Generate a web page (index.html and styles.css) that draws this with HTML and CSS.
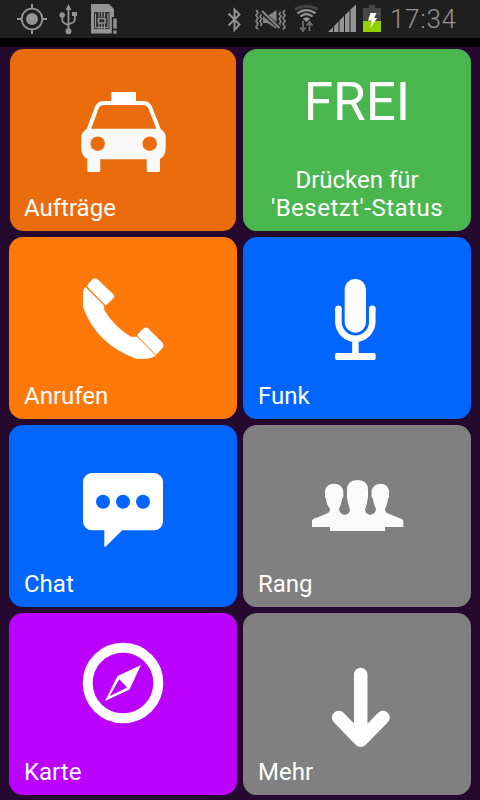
FILE: index.html
```html
<!DOCTYPE html>
<html lang="de">
<head>
  <meta charset="UTF-8" />
  <title>Taxi</title>
  <meta name="viewport" content="width=device-width, initial-scale=1" />
  <link rel="stylesheet" href="styles.css">
</head>
<body>
  <header class="statusbar">
    <div class="notifications">
      <svg width="30" height="38" viewBox="0 0 30 38">
        <circle cx="15" cy="19" r="6" fill="#949494"/>
        <circle cx="15" cy="19" r="10.3" fill="none" stroke="#949494" stroke-width="1.8"/>
        <path d="M15 4v5M15 29v5M0 19h5M25 19h5" stroke="#949494" stroke-width="2"/>
      </svg>
      <svg width="20" height="38" viewBox="0 0 20 38">
        <path d="M9.5 8v23M3.3 16v4.5q0 1.5 1.5 2.3l4.7 2.7M15.8 15v5q0 1.5-1.5 2.3L9.5 24.5" fill="none" stroke="#949494" stroke-width="1.8"/>
        <path d="M9.5 4L12.5 10h-6zM13 12h5v4h-5z" fill="#949494"/>
        <circle cx="3.2" cy="15" r="2.7" fill="#949494"/>
        <circle cx="9.5" cy="31.2" r="3" fill="#949494"/>
      </svg>
      <svg width="27" height="38" viewBox="0 0 27 38">
        <path d="M0 4h18l5 5v8h-2v16.5H0z" fill="#949494"/>
        <path d="M3 12h15.500v17H3z" fill="#2e2e2e"/>
        <path d="M4.500 13.500v14h12.500v-14M8 12v5M10.800 12v5M13.500 12v5M8 24v5M10.800 24v5M13.500 24v5" fill="none" stroke="#949494" stroke-width="1.100"/>
        <path d="M7.500 18.500h6.500v4.500h-6.500z" fill="none" stroke="#949494" stroke-width="1.600"/>
        <path d="M20.800 17h5.200v17h-5.200z" fill="#1f1f1f"/>
        <path d="M22.300 18.500h3.400v10h-3.400zM22.300 30.500h3.400v3.300h-3.400z" fill="#949494"/>
      </svg>
    </div>
    <div class="system">
      <svg width="20" height="38" viewBox="0 0 20 38">
        <path d="M1.500 13.500L12.500 24.500 7.500 30V9.500L12.500 14.500 1.500 25.500" fill="none" stroke="#949494" stroke-width="1.9"/>
      </svg>
      <svg width="34" height="38" viewBox="0 0 34 38">
        <path d="M3 10l2 2.500-2 3 2 2.700-2 3 2 2.700-2 3 2 2.500M7.500 12l1.300 2-1.800 2.500 1.800 2.500-1.800 2.500 1.800 2.500-1.300 2M32 10l-2 2.500 2 3-2 2.700 2 3-2 2.700 2 3-2 2.500M27.500 12l-1.300 2 1.800 2.500-1.800 2.500 1.800 2.500-1.800 2.500 1.300 2" fill="none" stroke="#858585" stroke-width="1.700"/>
        <path d="M10 16h4.500l9-6v19l-9-6H10z" fill="#858585"/>
        <path d="M8 11.500L27 28" stroke="#1f1f1f" stroke-width="4"/>
        <path d="M9 11L26.500 28" stroke="#858585" stroke-width="2.200"/>
      </svg>
      <svg width="28" height="38" viewBox="0 0 28 38">
        <path d="M2 9.300q11.500-6 23 0" fill="none" stroke="#444" stroke-width="3"/>
        <path d="M4.500 13.300q9-6.500 18 0M7.500 16.500q6-5 12 0" fill="none" stroke="#949494" stroke-width="2.200"/>
        <path d="M9.800 18.700q3.700-3 7.400 0L13.500 22z" fill="#949494"/>
        <path d="M10 21v10M7 27.500l3 3.500 2.500-3.500M16.500 31v-9M13.500 25.500l3-3.500 3 3.500" fill="none" stroke="#6d6d6d" stroke-width="1.800"/>
      </svg>
      <svg width="29" height="38" viewBox="0 0 29 38">
        <path d="M1 32L6 27V32zM7 26L11.500 21.500V32H7zM12.500 20.500L17 16V32H12.500zM18 15L22.500 10.500V32H18zM23.500 9.500L29 4.500V32H23.500z" fill="#949494"/>
      </svg>
      <svg width="20" height="38" viewBox="0 0 20 38">
        <path d="M7 5h6v3h6v13H1V8h6z" fill="#464646"/>
        <path d="M1 21h18v11H1z" fill="#92d000"/>
        <path d="M8.500 13h6l-2.300 5h3L8.300 28l1.500-7.500H6z" fill="#fff"/>
      </svg>
      <span class="clock">17:34</span>
    </div>
  </header>

  <main class="tiles">
    <div class="tile jobs">
      <svg class="icon" viewBox="0 0 120 120">
        <path d="M49.5 19h22.500q1 0 1 1v9H48.300v-9q0-1 1.200-1z" fill="#fff"/>
        <path d="M25.500 57L34 34Q36 29.900 41 29.900H80Q85 29.900 87 34L96 57" fill="none" stroke="#fff" stroke-width="4"/>
        <path d="M24 55.700H97Q102.700 59 102.700 64V75Q102.700 83 97 86V97.500Q97 99 95.500 99H85.200Q83.700 99 83.700 97.500V86.300H37.300V97.500Q37.300 99 35.800 99H25.800Q24.300 99 24.300 97.500V86Q18.300 83 18.300 75V64Q18.300 59 24 55.700z" fill="#f8f8f8"/>
        <circle class="hole" cx="34.7" cy="70.7" r="7.2"/>
        <circle class="hole" cx="86.7" cy="70.7" r="7.2"/>
      </svg>
      <span class="label">Aufträge</span>
    </div>

    <div class="tile status">
      <span class="state">FREI</span>
      <span class="hint">Drücken für<br><span class="target">'Besetzt'-Status</span></span>
    </div>

    <div class="tile call">
      <svg class="icon" viewBox="0 0 120 120">
        <path d="M29.500 18.300Q32 16 34.500 18.300L50.300 33.300Q52.300 35.200 50.300 37.200L43.500 44Q42.500 44.500 41.700 43.500L25 26.500Q23.500 25 25 23z"/>
        <path d="M22.300 25.700L41 44.500 41.300 49Q51 65.500 67.700 75.700L74 75.700 92.700 94.700Q87 98 80 98H73.700Q33 83 20 46V32Q20 28 22.300 25.700z"/>
        <path d="M75 72.700L80.500 67.500Q83 65.500 85.300 67.500L99.500 81.700Q101.300 84 100 86.300L94 93Q93 94 92 93L75 75.500Q73.800 74 75 72.700z"/>
      </svg>
      <span class="label">Anrufen</span>
    </div>

    <div class="tile radio">
      <svg class="icon" viewBox="0 0 120 120">
        <rect x="47.7" y="18" width="21.3" height="53.7" rx="10.6"/>
        <path d="M41.400 47.500V61.700a17 17.300 0 0 0 33.900 0V47.500M58.400 79V94" fill="none" stroke="#fff" stroke-width="6.5"/>
        <circle cx="41.400" cy="47.800" r="3.250"/>
        <circle cx="75.300" cy="47.800" r="3.250"/>
        <rect x="38" y="92" width="40.7" height="7" rx="2"/>
      </svg>
      <span class="label">Funk</span>
    </div>

    <div class="tile chat">
      <svg class="icon" viewBox="0 0 120 120">
        <rect x="20" y="24" width="80" height="57.3" rx="9"/>
        <path d="M41.300 80V97.500L42.300 98 59.500 81V80z"/>
        <circle class="hole" cx="40" cy="52.7" r="7"/>
        <circle class="hole" cx="60" cy="52.7" r="7"/>
        <circle class="hole" cx="80" cy="52.7" r="7"/>
      </svg>
      <span class="label">Chat</span>
    </div>

    <div class="tile rank">
      <svg class="icon" viewBox="0 0 120 120">
        <path d="M15 78V72Q15 70 19 69L30 64.500Q33 63 33 60L30 55 29 50 28 48V42Q29 35 37 34.700Q45 35 46.300 42V48L45 50 44 55 42 60Q42 63 45 65L48 66 52 64 53 61 51 54 50 48V41Q50 31 60.300 31Q71 31 71 41V48L70 54 68 61 69 64 73 66 76 65Q79 63 79 60L77 55 76 50 74.500 48V42Q76 35 83.500 34.700Q91 35 92 42V48L91 50 90 55 88 60Q88 63 91 64.500L102 69Q106.300 70 106.300 72V78H88V82H33V78z" fill="#fafafa"/>
      </svg>
      <span class="label">Rang</span>
    </div>

    <div class="tile map">
      <svg class="icon" viewBox="0 0 120 120">
        <circle cx="60" cy="46" r="35.3" fill="none" stroke="#fff" stroke-width="10"/>
        <path d="M78 28L66.500 52.500 42 64 54.500 39z"/>
        <path class="hole" d="M56.300 42.300L64 50.500 46.500 59.300z"/>
      </svg>
      <span class="label">Karte</span>
    </div>

    <div class="tile more">
      <svg class="icon" viewBox="0 0 120 120">
        <path d="M63.700 37.500V103M41.700 80.500L63.700 103.200 86 80.500" fill="none" stroke="#fff" stroke-width="13.5" stroke-linecap="round" stroke-linejoin="round"/>
      </svg>
      <span class="label">Mehr</span>
    </div>
  </main>
</body>
</html>
```
FILE: styles.css
```css
* {
  box-sizing: border-box;
}
body {
  margin: 0;
  height: 800px;
  background: #26092f;
  color: #fff;
  font-family: Roboto, 'Noto Sans', sans-serif;
  overflow: hidden;
}

/* Android status bar */
.statusbar {
  display: flex;
  justify-content: space-between;
  height: 47px;
  padding: 0 22px 0 17px;
  background: #1f1f1f;
  border-bottom: 9px solid #000;
}
.notifications {
  display: flex;
  gap: 12px;
}
.system {
  display: flex;
  gap: 6px;
}
.clock {
  width: 70px;
  padding-left: 2px;
  color: #949494;
  font-size: 26px;
  font-weight: 300;
  letter-spacing: 0.7px;
  line-height: 38px;
}

/* Main menu */
.tiles {
  display: grid;
  grid-template-columns: 228px 228px;
  grid-auto-rows: 182px;
  gap: 6px;
  padding: 2px 9px 0;
}
.tile {
  display: flex;
  flex-direction: column;
  align-items: center;
  padding-top: 24px;
  border-radius: 14px;
  background: #808080;
}
.icon {
  width: 120px;
  height: 120px;
  fill: #fff;
}
.label {
  align-self: flex-start;
  margin: 1px 0 0 15px;
  font-size: 24px;
  line-height: 28px;
}
.jobs {
  background: #ea6c0c;
  border-left: 1px solid #26092f;
  border-right: 1px solid #26092f;
}
.jobs .label {
  margin-left: 14px;
}
.jobs .hole {
  fill: #ea6c0c;
}
.status {
  background: #4ab74e;
  text-align: center;
}
.call {
  background: #ff780a;
}
.radio,
.chat {
  background: #0066ff;
}
.chat .hole {
  fill: #0066ff;
}
.map {
  background: #bb00ff;
}
.map .hole {
  fill: #bb00ff;
}
.state {
  margin-top: -1px;
  font-size: 53px;
  line-height: 60px;
}
.hint {
  margin-top: 34px;
  font-size: 24px;
  line-height: 28px;
}
.target {
  letter-spacing: 0.5px;
}
```
